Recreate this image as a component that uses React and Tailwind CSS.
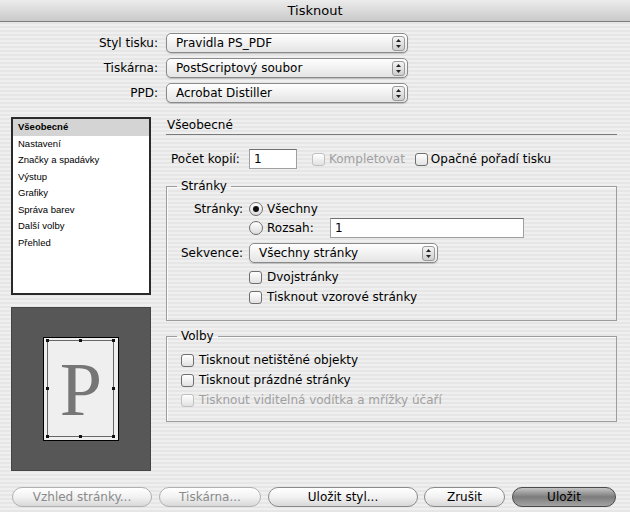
import React from "react";

const Arrows = () => (
  <div className="ml-auto mr-[2px] flex h-[15px] w-[13px] items-center justify-center rounded-[3px] border border-[#9a9a9a] bg-gradient-to-b from-[#f4f4f4] to-[#cfcfcf]">
    <svg width="7" height="11" viewBox="0 0 7 11">
      <path d="M3.5 1 L6 4 L1 4 Z" fill="#222" />
      <path d="M3.5 10 L6 7 L1 7 Z" fill="#222" />
    </svg>
  </div>
);

const Select = ({ text, className }) => (
  <div
    className={
      "flex h-[20px] items-center rounded-[5px] border border-[#8a8a8a] bg-gradient-to-b from-white to-[#e4e4e4] pl-[9px] shadow-[0_1px_1px_rgba(0,0,0,0.18)] " +
      className
    }
  >
    <span>{text}</span>
    <Arrows />
  </div>
);

const Checkbox = ({ disabled }) => (
  <div
    className={
      "h-[13px] w-[13px] shrink-0 rounded-[3px] border bg-gradient-to-b from-white to-[#e2e2e2] " +
      (disabled ? "border-[#c0c0c0]" : "border-[#6f6f6f]")
    }
  />
);

const Radio = ({ checked }) => (
  <div className="flex h-[14px] w-[14px] shrink-0 items-center justify-center rounded-full border border-[#6f6f6f] bg-gradient-to-b from-white to-[#dcdcdc]">
    {checked && <div className="h-[6px] w-[6px] rounded-full bg-[#111]" />}
  </div>
);

const Button = ({ text, className, disabled, primary }) => (
  <div
    className={
      "flex h-[20px] items-center justify-center rounded-full border " +
      (primary
        ? "border-[#4a4a4a] bg-gradient-to-b from-[#c4c4c4] via-[#7c7c7c] to-[#a4a4a4] text-black"
        : "border-[#8a8a8a] bg-gradient-to-b from-white via-[#f2f2f2] to-[#d8d8d8] ") +
      (disabled ? " border-[#b0b0b0] text-[#8a8a8a]" : "") +
      " " +
      className
    }
  >
    {text}
  </div>
);

const items = [
  "Všeobecné",
  "Nastavení",
  "Značky a spadávky",
  "Výstup",
  "Grafiky",
  "Správa barev",
  "Další volby",
  "Přehled",
];

export default function App() {
  return (
    <div className="flex h-[512px] w-[630px] flex-col overflow-hidden bg-[repeating-linear-gradient(to_bottom,#efefef_0px,#efefef_2px,#e6e6e6_2px,#e6e6e6_4px)] font-['DejaVu_Sans',sans-serif] text-[12px] text-black">
      {/* title */}
      <div className="flex h-[22px] items-center justify-center border-b border-[#7d7d7d] bg-gradient-to-b from-[#ececec] to-[#c9c9c9] text-[13px]">
        Tisknout
      </div>

      {/* top selects */}
      <div className="mt-[11px] flex flex-col gap-[5px]">
        <div className="flex h-[20px] items-center">
          <span className="w-[158px] text-right">Styl tisku:</span>
          <Select text="Pravidla PS_PDF" className="ml-[8px] w-[242px]" />
        </div>
        <div className="flex h-[20px] items-center">
          <span className="w-[158px] text-right">Tiskárna:</span>
          <Select text="PostScriptový soubor" className="ml-[8px] w-[242px]" />
        </div>
        <div className="flex h-[20px] items-center">
          <span className="w-[158px] text-right">PPD:</span>
          <Select text="Acrobat Distiller" className="ml-[8px] w-[242px]" />
        </div>
      </div>

      {/* main */}
      <div className="mt-[14px] flex">
        <div className="ml-[11px] flex w-[140px] flex-col">
          <div className="h-[178px] border-2 border-[#2a2a2a] bg-white font-['Liberation_Sans',sans-serif] text-[9.5px]">
            {items.map((it, i) => (
              <div
                key={it}
                className={
                  "flex h-[16.5px] items-center pl-[5px] " +
                  (i === 0 ? "bg-[#d4d4d4] font-bold" : "")
                }
              >
                {it}
              </div>
            ))}
          </div>
          <div className="mt-[12px] flex h-[164px] items-center justify-center border border-[#444] bg-[#575757]">
            <div className="relative flex h-[104px] w-[76px] items-center justify-center border-[1.5px] border-black bg-[#efefef]">
              <svg className="absolute inset-0" width="73" height="101" viewBox="0 0 73 101">
                <rect x="3.5" y="2.5" width="66" height="96" fill="none" stroke="#666" strokeWidth="1" />
                {[
                  [3.5, 2.5],
                  [36.5, 2.5],
                  [69.5, 2.5],
                  [3.5, 50.5],
                  [69.5, 50.5],
                  [3.5, 98.5],
                  [36.5, 98.5],
                  [69.5, 98.5],
                ].map(([x, y], i) => (
                  <rect key={i} x={x - 1.5} y={y - 1.5} width="3" height="3" fill="#111" />
                ))}
              </svg>
              <span className="font-['Liberation_Serif',serif] text-[76px] leading-none text-[#767676]">P</span>
            </div>
          </div>
        </div>

        <div className="ml-[15px] flex w-[451px] flex-col">
          <div className="border-b border-[#7a7a7a] pl-[1px] leading-[17px]">Všeobecné</div>

          <div className="mt-[14px] flex h-[20px] items-center">
            <span className="ml-[5px] w-[78px]">Počet kopií:</span>
            <div className="flex h-[20px] w-[48px] items-center border border-[#a0a0a0] border-t-[#6f6f6f] bg-white pl-[4px]">
              1
            </div>
            <div className="ml-[15px] flex items-center gap-[4px] text-[#a0a0a0]">
              <Checkbox disabled />
              <span>Kompletovat</span>
            </div>
            <div className="ml-[10px] flex items-center gap-[3px]">
              <Checkbox />
              <span>Opačné pořadí tisku</span>
            </div>
          </div>

          <fieldset className="mt-[9px] border border-[#9c9c9c] shadow-[inset_1px_1px_0_rgba(255,255,255,0.8)]">
            <legend className="ml-[10px] px-[4px] leading-[16px]">Stránky</legend>
            <div className="pb-[14px] pl-[14px] pt-[6px]">
              <div className="flex h-[18px] items-center">
                <span className="w-[62px] text-right">Stránky:</span>
                <div className="ml-[6px] flex items-center gap-[4px]">
                  <Radio checked />
                  <span>Všechny</span>
                </div>
              </div>
              <div className="flex h-[20px] items-center">
                <div className="ml-[68px] flex w-[81px] items-center gap-[4px]">
                  <Radio />
                  <span>Rozsah:</span>
                </div>
                <div className="flex h-[20px] w-[194px] items-center border border-[#a0a0a0] border-t-[#6f6f6f] bg-white pl-[4px]">
                  1
                </div>
              </div>
              <div className="mt-[5px] flex h-[20px] items-center">
                <span className="w-[62px]">Sekvence:</span>
                <Select text="Všechny stránky" className="ml-[6px] w-[189px]" />
              </div>
              <div className="ml-[68px] mt-[5px] flex h-[18px] items-center gap-[5px]">
                <Checkbox />
                <span>Dvojstránky</span>
              </div>
              <div className="ml-[68px] mt-[2px] flex h-[18px] items-center gap-[5px]">
                <Checkbox />
                <span>Tisknout vzorové stránky</span>
              </div>
            </div>
          </fieldset>

          <fieldset className="mt-[7px] border border-[#9c9c9c] shadow-[inset_1px_1px_0_rgba(255,255,255,0.8)]">
            <legend className="ml-[10px] px-[4px] leading-[16px]">Volby</legend>
            <div className="flex flex-col gap-[2px] pb-[12px] pl-[14px] pt-[7px]">
              <div className="flex h-[18px] items-center gap-[5px]">
                <Checkbox />
                <span>Tisknout netištěné objekty</span>
              </div>
              <div className="flex h-[18px] items-center gap-[5px]">
                <Checkbox />
                <span>Tisknout prázdné stránky</span>
              </div>
              <div className="flex h-[18px] items-center gap-[5px] text-[#a0a0a0]">
                <Checkbox disabled />
                <span>Tisknout viditelná vodítka a mřížky účaří</span>
              </div>
            </div>
          </fieldset>
        </div>
      </div>

      {/* buttons */}
      <div className="mt-auto mb-[5px] ml-[12px] flex text-[12px]">
        <Button text="Vzhled stránky..." disabled className="w-[140px]" />
        <Button text="Tiskárna..." disabled className="ml-[7px] w-[102px]" />
        <Button text="Uložit styl..." className="ml-[7px] w-[150px]" />
        <Button text="Zrušit" className="ml-[6px] w-[81px]" />
        <Button text="Uložit" primary className="ml-[7px] w-[104px]" />
      </div>
    </div>
  );
}
